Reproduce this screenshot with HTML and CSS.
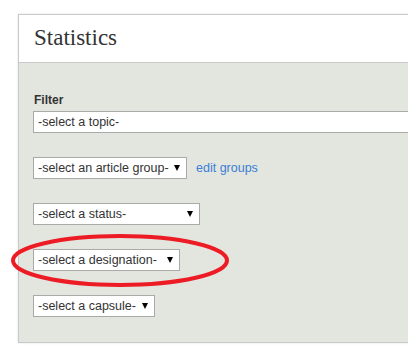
FILE: index.html
```html
<!DOCTYPE html>
<html lang="en">

<head>
  <meta charset="UTF-8">
  <title>Statistics</title>
  <link rel="stylesheet" href="styles.css">
</head>

<body>

  <div class="panel">
    <div class="panel-header">
      <h2>Statistics</h2>
    </div>

    <div class="panel-body">
      <label class="filter-label">Filter</label>

      <div class="filters">
        <div class="select select-topic"><span>-select a topic-</span></div>

        <div class="filter-row">
          <div class="select select-group"><span>-select an article group-</span><i class="arrow"></i></div>
          <a href="#" class="edit-link">edit groups</a>
        </div>

        <div class="filter-row">
          <div class="select select-status"><span>-select a status-</span><i class="arrow"></i></div>
        </div>

        <div class="filter-row">
          <div class="select select-designation"><span>-select a designation-</span><i class="arrow"></i></div>
        </div>

        <div class="filter-row">
          <div class="select select-capsule"><span>-select a capsule-</span><i class="arrow"></i></div>
        </div>
      </div>
    </div>
  </div>

  <!-- red highlight drawn over the designation filter -->
  <svg class="highlight" width="224" height="58" viewBox="0 0 224 58">
    <ellipse cx="111" cy="28.5" rx="107" ry="24.5" fill="none" stroke="#ed1c24" stroke-width="4" />
  </svg>

</body>

</html>
```

FILE: styles.css
```css
* {
  box-sizing: border-box;
}

body {
  margin: 0;
  font-family: Arial, "Liberation Sans", sans-serif;
  background-color: #ffffff;
  overflow: hidden;
  position: relative;
  height: 354px;
}

/* PANEL */

.panel {
  margin: 14px 0 0 18px;
  width: 420px;
  border: 1px solid #c9c9c9;
  box-shadow: 0 0 2px rgba(0, 0, 0, .12);
  background-color: #e3e5df;
}

.panel-header {
  background-color: #ffffff;
  border-bottom: 1px solid #c9c9c9;
  padding: 10px 15px 11px;
}

.panel-header h2 {
  margin: 0;
  font-family: "Liberation Serif", serif;
  font-weight: normal;
  font-size: 23px;
  line-height: 26px;
  color: #333333;
}

.panel-body {
  padding: 30px 14px 25px;
}

.filter-label {
  display: block;
  font-size: 12px;
  font-weight: bold;
  line-height: 14px;
  color: #333333;
  margin: 0 0 4px 1px;
}

/* FILTERS */

.filters {
  display: flex;
  flex-direction: column;
  gap: 24px;
}

.filter-row {
  display: flex;
  align-items: center;
  gap: 9px;
}

.select {
  display: flex;
  align-items: center;
  justify-content: space-between;
  height: 22px;
  padding: 0 6px 0 4px;
  background-color: #ffffff;
  border: 1px solid #a9a9a9;
  font-size: 12.5px;
  color: #333333;
  white-space: nowrap;
}

.select-topic {
  width: 100%;
}

.select-group {
  width: 154px;
}

.select-status {
  width: 167px;
}

.select-designation {
  width: 147px;
}

.select-capsule {
  width: 122px;
}

.arrow {
  width: 0;
  height: 0;
  border-left: 3.5px solid transparent;
  border-right: 3.5px solid transparent;
  border-top: 6px solid #000000;
}

.edit-link {
  font-size: 12.5px;
  color: #3b7ed6;
  text-decoration: none;
}

/* HIGHLIGHT */

.highlight {
  position: absolute;
  left: 9px;
  top: 232px;
}
```
